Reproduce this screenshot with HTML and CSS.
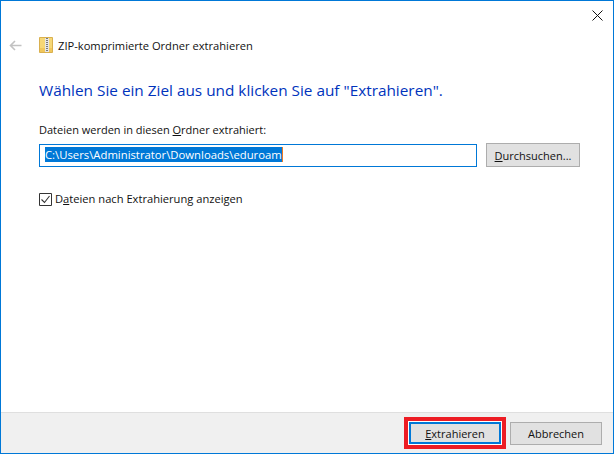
FILE: index.html
```html
<!DOCTYPE html>
<html lang="de">
<head>
<meta charset="utf-8">
<title>ZIP-komprimierte Ordner extrahieren</title>
<link rel="stylesheet" href="styles.css">
</head>
<body>
<div class="window">
  <div class="closebar">
    <svg class="close" width="11" height="11" viewBox="0 0 11 11"><path d="M.5.5l10 10M10.5.5l-10 10" stroke="#111" stroke-width="1" fill="none"/></svg>
  </div>
  <div class="nav">
    <svg class="back" width="13" height="11" viewBox="0 0 13 11"><path d="M12.5 5.5H1.5M6 1L1.5 5.5 6 10" stroke="#c2c2c2" stroke-width="1.6" fill="none"/></svg>
    <svg class="zip" width="14" height="16" viewBox="0 0 14 16">
      <path d="M.5.5h13v15H.5z" fill="#f6d776" stroke="#d9b04f"/>
      <path d="M1 11h12v4H1z" fill="#f1c75c"/>
      <path d="M6 1h4v14H6z" fill="#e6e6e6"/>
      <path d="M7 1h2v1H7zM7 3h2v1H7zM7 5h2v1H7zM7 7h2v1H7zM7 9h2v1H7zM7 11h2v1H7zM7 13h2v1H7z" fill="#7a7a7a"/>
    </svg>
    <span class="title">ZIP-komprimierte Ordner extrahieren</span>
  </div>
  <main class="content">
    <h1 class="heading">Wählen Sie ein Ziel aus und klicken Sie auf "Extrahieren".</h1>
    <label class="label">Dateien werden in diesen <u>O</u>rdner extrahiert:</label>
    <div class="pathrow">
      <div class="input"><span class="selected">C:\Users\Administrator\Downloads\eduroam</span></div>
      <button class="btn browse"><u>D</u>urchsuchen...</button>
    </div>
    <div class="check">
      <svg class="box" width="13" height="13" viewBox="0 0 13 13"><path d="M.5.5h12v12H.5z" fill="#fff" stroke="#333"/><path d="M2.5 6.5l3 3 5-6.5" stroke="#333" stroke-width="1.1" fill="none"/></svg>
      <span class="checktext">D<u>a</u>teien nach Extrahierung anzeigen</span>
    </div>
  </main>
  <footer class="footer">
    <div class="highlight"><button class="btn primary"><u>E</u>xtrahieren</button></div>
    <button class="btn cancel">Abbrechen</button>
  </footer>
</div>
</body>
</html>
```
FILE: styles.css
```css
* { box-sizing: border-box; }
html, body { margin: 0; padding: 0; }
body { width: 614px; height: 454px; overflow: hidden; background: #fff; font-family: "Open Sans", "Noto Sans", sans-serif; font-size: 11px; color: #111; }
.window { width: 614px; height: 454px; border: 1px solid #0078d7; display: flex; flex-direction: column; background: #fff; }
.closebar { height: 23px; display: flex; justify-content: flex-end; padding: 9px 10px 0 0; flex: none; }
.close { display: block; }
.nav { height: 24px; margin-top: 9px; display: flex; align-items: center; padding-left: 8px; flex: none; }
.back { flex: none; }
.zip { flex: none; margin-left: 17px; }
.title { margin-left: 5px; font-size: 11.15px; }
.content { flex: 1; padding: 23px 0 0 38px; }
.heading { margin: 0; font-size: 15.35px; line-height: 20px; font-weight: 400; color: #0033bc; }
.label { display: block; margin-top: 22px; line-height: 16px; }
.pathrow { display: flex; align-items: flex-start; margin-top: 5px; }
.input { width: 438px; height: 23px; margin-top: 1px; border: 1px solid #0078d7; padding: 2px 0 0 5px; line-height: 15px; font-size: 11.3px; }
.selected { background: #0078d7; color: #fff; display: inline-block; height: 15px; border-right: 1px solid #f07a20; }
.btn { font: inherit; color: #111; background: #e1e1e1; border: 1px solid #adadad; padding: 0; border-radius: 0; }
.browse { width: 94px; height: 24px; margin-left: 9px; }
.check { display: flex; align-items: center; gap: 3px; margin-top: 24px; line-height: 16px; }
.checktext { font-size: 11.15px; }
.box { display: block; flex: none; }
.footer { flex: none; height: 41px; background: #f0f0f0; border-top: 1px solid #dfdfdf; display: flex; justify-content: flex-end; align-items: flex-start; padding: 4px 11px 0 0; }
.highlight { border: 4px solid #ed1c24; padding: 1px; background: #fff; width: 102px; height: 32px; }
.primary { width: 100%; height: 100%; border: 2px solid #0078d7; }
.cancel { width: 92px; height: 23px; margin-left: 4px; margin-top: 5px; }
```
